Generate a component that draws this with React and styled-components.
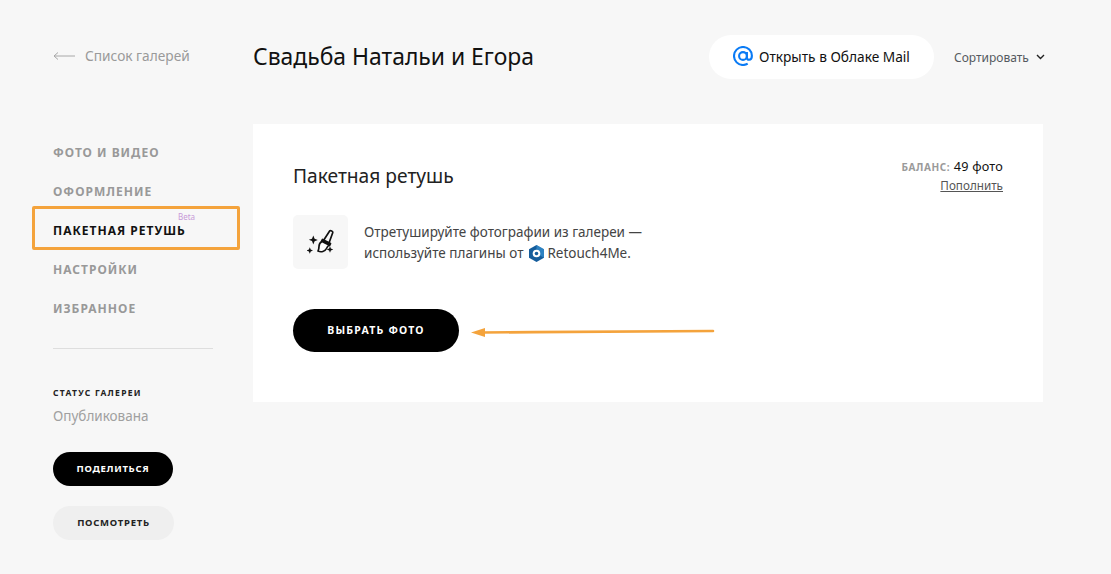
import React from "react";
import styled, { createGlobalStyle } from "styled-components";

const Global = createGlobalStyle`
  html, body { margin: 0; padding: 0; background: #f7f7f7; }
  body { font-family: "Noto Sans", "Open Sans", sans-serif; color: #000; }
  * { box-sizing: border-box; }
`;

const Page = styled.div`
  position: relative;
  width: 1111px;
  height: 574px;
  overflow: hidden;
  padding: 35px 68px 0 53px;
  background: #f7f7f7;
`;

const Header = styled.header`
  display: flex;
  align-items: center;
  height: 44px;
  margin-bottom: 45px;
`;

const BackLink = styled.a`
  display: flex;
  align-items: center;
  gap: 10px;
  width: 200px;
  font-size: 13.7px;
  line-height: 18px;
  padding-bottom: 2px;
  color: #9a9a9a;
`;

const Title = styled.h1`
  flex: 1;
  margin: 0;
  padding-bottom: 2px;
  font-size: 22.9px;
  font-weight: 400;
  color: #111;
`;

const CloudButton = styled.a`
  display: flex;
  flex: none;
  align-items: center;
  gap: 6px;
  width: 225px;
  height: 44px;
  padding: 0 0 2px 24px;
  border-radius: 22px;
  background: #fff;
  font-size: 13.7px;
  color: #111;
`;

const Sort = styled.div`
  display: flex;
  flex: none;
  align-items: center;
  gap: 7px;
  margin-left: 20px;
  width: 89px;
  font-size: 12px;
  color: #555a60;
`;

const Body = styled.div`
  display: flex;
  align-items: flex-start;
`;

const Sidebar = styled.aside`
  width: 200px;
  flex: none;
`;

const Nav = styled.nav`
  display: flex;
  flex-direction: column;
  gap: 19px;
  padding-top: 21px;
`;

const NavItem = styled.a`
  position: relative;
  display: block;
  height: 20px;
  line-height: 16px;
  font-size: 12px;
  font-weight: 700;
  letter-spacing: 1px;
  white-space: nowrap;
  color: ${(p) => (p.$active ? "#111" : "#999")};
`;

const BetaTag = styled.span`
  position: absolute;
  left: 125px;
  top: -12px;
  font-size: 8px;
  line-height: 12px;
  font-weight: 400;
  letter-spacing: 0;
  color: #c79ad8;
`;

const Divider = styled.hr`
  width: 160px;
  height: 1px;
  margin: 27px 0 0;
  border: 0;
  background: #dedede;
`;

const StatusLabel = styled.div`
  margin-top: 38px;
  font-size: 8.5px;
  line-height: 12px;
  font-weight: 700;
  letter-spacing: 1.3px;
  color: #222;
`;

const StatusValue = styled.div`
  margin-top: 7px;
  font-size: 13.5px;
  line-height: 20px;
  color: #a0a0a0;
`;

const Pill = styled.button`
  display: block;
  width: ${(p) => p.$width}px;
  height: ${(p) => p.$height}px;
  margin-top: ${(p) => p.$top}px;
  padding: 0 0 ${(p) => p.$lift || 0}px;
  border: 0;
  border-radius: 22px;
  background: ${(p) => (p.$light ? "#efefef" : "#000")};
  color: ${(p) => (p.$light ? "#222" : "#fff")};
  font-family: inherit;
  font-size: ${(p) => p.$size}px;
  font-weight: 700;
  letter-spacing: ${(p) => p.$spacing}px;
`;

const Card = styled.main`
  width: 790px;
  height: 278px;
  padding: 40px;
  background: #fff;
`;

const CardHead = styled.div`
  display: flex;
  justify-content: space-between;
  height: 51px;
`;

const CardTitle = styled.h2`
  margin: -1px 0 0;
  font-size: 19.2px;
  line-height: 25px;
  font-weight: 400;
  color: #222;
`;

const Balance = styled.div`
  display: flex;
  flex-direction: column;
  align-items: flex-end;
  margin-top: -7px;
`;

const BalanceLine = styled.div`
  height: 19px;
  line-height: 18px;
  font-size: 12.7px;
  letter-spacing: 0.2px;
  color: #111;
`;

const BalanceLabel = styled.span`
  font-size: 10px;
  font-weight: 700;
  letter-spacing: 0.6px;
  color: #9a9a9a;
`;

const TopUp = styled.a`
  font-size: 11.7px;
  line-height: 18px;
  color: #555;
  text-decoration: underline;
`;

const Promo = styled.div`
  display: flex;
  align-items: center;
  gap: 16px;
`;

const IconBox = styled.div`
  display: flex;
  align-items: center;
  justify-content: center;
  width: 55px;
  height: 54px;
  border-radius: 5px;
  background: #f7f7f7;
`;

const PromoText = styled.div`
  padding-top: 1px;
  font-size: 13.5px;
  line-height: 21px;
  color: #444;
`;

const Brand = styled.span`
  display: inline-flex;
  align-items: center;
  gap: 3px;
  margin-left: 6px;
  vertical-align: top;
`;

const Highlight = styled.div`
  position: absolute;
  left: 32px;
  top: 206px;
  width: 208px;
  height: 44px;
  border: 3px solid #f4a33c;
  border-radius: 2px;
`;

const ArrowOverlay = styled.svg`
  position: absolute;
  left: 470px;
  top: 322px;
`;

const ArrowLeft = () => (
  <svg width="22" height="10" viewBox="0 0 22 10" fill="none" stroke="#a8a8a8" strokeWidth="1">
    <path d="M22 5H1M5 1.500 1 5l4 3.500" />
  </svg>
);

const MailAt = () => (
  <svg width="20" height="20" viewBox="0 0 20 20" fill="none" stroke="#0a7bf5" strokeWidth="2.100">
    <circle cx="10" cy="10" r="3.900" />
    <path d="M13.900 6v5.400c0 1.500 1 2.300 2.200 2.300 1.600 0 2.800-1.600 2.800-3.900C18.900 5 15 1 10 1S1 5 1 10s4 9 9 9c1.900 0 3.400-.5 4.700-1.300" />
  </svg>
);

const Chevron = () => (
  <svg width="9" height="6" viewBox="0 0 9 6" fill="none" stroke="#222" strokeWidth="1.400" style={{ flex: "none" }}>
    <path d="M1 1l3.500 3.500L8 1" />
  </svg>
);

const Brush = () => (
  <svg width="28" height="26" viewBox="0 0 28 26" fill="none" stroke="#111" strokeWidth="1.700" strokeLinejoin="round">
    <path d="M16.500 11.500 22.800 1.800c.6-.8 3.400.6 3 1.700L22 14" />
    <path fill="#111" d="M15.500 10.500 23.500 14.500 22.500 16.500 14.500 12.500z" />
    <path fill="#fff" d="M15 12.500c-2 1-3 3-3 5 0 1.800-.3 3-1 4.500 3 1.500 7 .6 8.500-2.500.8-1.700 1.500-2.500 2.500-3.500z" />
    <path fill="#111" stroke="none" d="M6.300 6.500l1.300 3.200 3.200 1.300-3.200 1.300-1.300 3.200L5 12 1.800 10.700 5 9.700zM2.800 18.300l.9 2.300 2.300.9-2.300.9-.9 2.300-.9-2.300-2.300-.9 2.300-.9zM23 17.300l.9 2.300 2.300.9-2.300.9-.9 2.300-.9-2.300-2.300-.9 2.300-.9z" />
  </svg>
);

const RetouchLogo = () => (
  <svg width="15" height="17" viewBox="0 0 15 17">
    <path fill="#155d9c" d="M7.500 0 15 4.250v8.500L7.500 17 0 12.750v-8.500z" />
    <path fill="#3d9bdc" d="M7.500 0 15 4.250v8.500L7.500 8.500z" opacity=".6" />
    <circle cx="7.500" cy="8.500" r="3.800" fill="#fff" />
    <circle cx="7.500" cy="8.500" r="1.800" fill="#155d9c" />
  </svg>
);

export default function App() {
  return (
    <Page>
      <Global />
      <Header>
        <BackLink>
          <ArrowLeft />
          Список галерей
        </BackLink>
        <Title>Свадьба Натальи и Егора</Title>
        <CloudButton>
          <MailAt />
          Открыть в Облаке Mail
        </CloudButton>
        <Sort>
          Сортировать
          <Chevron />
        </Sort>
      </Header>
      <Body>
        <Sidebar>
          <Nav>
            <NavItem>ФОТО И ВИДЕО</NavItem>
            <NavItem>ОФОРМЛЕНИЕ</NavItem>
            <NavItem $active>
              ПАКЕТНАЯ РЕТУШЬ
              <BetaTag>Beta</BetaTag>
            </NavItem>
            <NavItem>НАСТРОЙКИ</NavItem>
            <NavItem>ИЗБРАННОЕ</NavItem>
          </Nav>
          <Divider />
          <StatusLabel>СТАТУС ГАЛЕРЕИ</StatusLabel>
          <StatusValue>Опубликована</StatusValue>
          <Pill $width={120} $height={34} $top={26} $size={9.5} $spacing={0.7} $lift={1}>ПОДЕЛИТЬСЯ</Pill>
          <Pill $width={121} $height={34} $top={20} $light $size={9.5} $spacing={0.75} $lift={1}>ПОСМОТРЕТЬ</Pill>
        </Sidebar>
        <Card>
          <CardHead>
            <CardTitle>Пакетная ретушь</CardTitle>
            <Balance>
              <BalanceLine>
                <BalanceLabel>БАЛАНС:</BalanceLabel> 49 фото
              </BalanceLine>
              <TopUp>Пополнить</TopUp>
            </Balance>
          </CardHead>
          <Promo>
            <IconBox>
              <Brush />
            </IconBox>
            <PromoText>
              Отретушируйте фотографии из галереи —
              <br />
              используйте плагины от
              <Brand>
                <RetouchLogo />
                Retouch4Me.
              </Brand>
            </PromoText>
          </Promo>
          <Pill $width={166} $height={43} $top={40} $size={10.5} $spacing={1.2} $lift={1}>ВЫБРАТЬ ФОТО</Pill>
        </Card>
      </Body>
      <Highlight />
      <ArrowOverlay width="246" height="20" viewBox="0 0 246 20">
        <path d="M12 10.500C90 10 170 9.500 243 9" stroke="#f4a33c" strokeWidth="2.600" strokeLinecap="round" fill="none" />
        <path d="M1 10.500 15 6v9z" fill="#f4a33c" />
      </ArrowOverlay>
    </Page>
  );
}
